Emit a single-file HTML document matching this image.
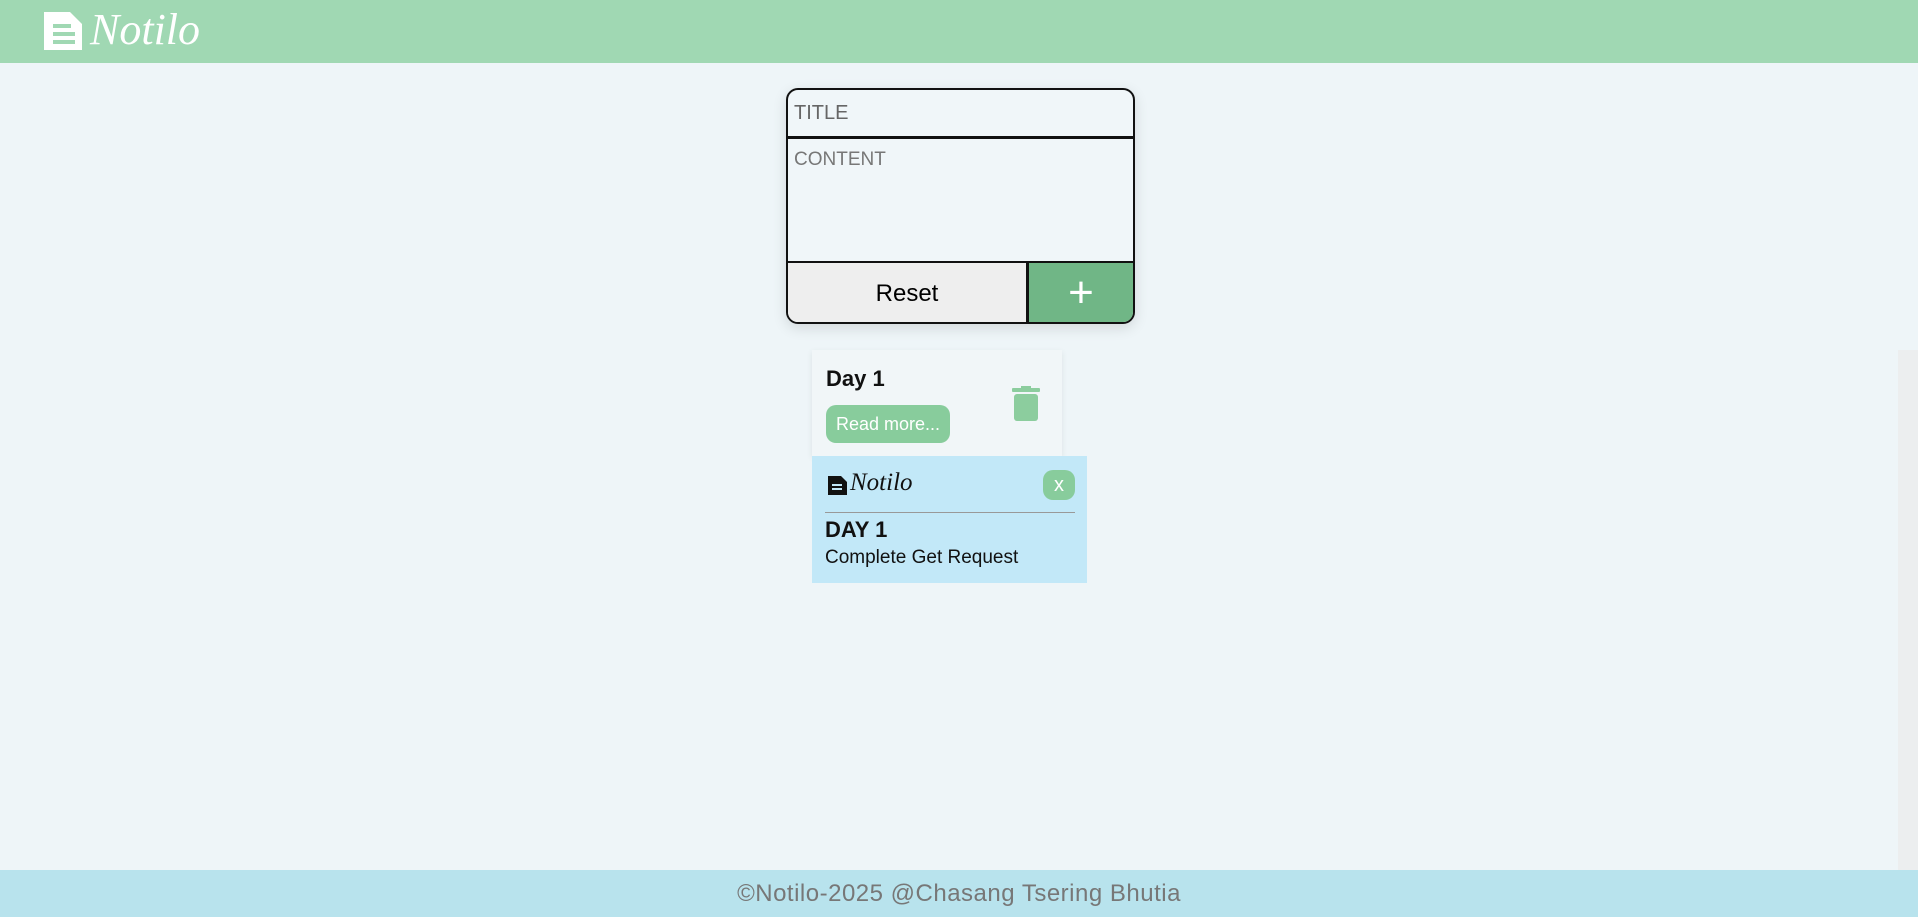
<!DOCTYPE html>
<html><head><meta charset="utf-8"><style>
*{box-sizing:border-box;margin:0;padding:0}
body{width:1918px;height:917px;overflow:hidden;background:#eef5f8;font-family:"Liberation Sans",sans-serif;position:relative}
.hdr{position:absolute;left:0;top:0;width:1918px;height:63px;background:#a0d8b3}
.logo{position:absolute;left:90px;top:4px;font-family:"Liberation Serif",serif;font-style:italic;font-size:44px;color:#fff}
.form{position:absolute;left:786px;top:88px;width:349px;height:236px;border:2px solid #111;border-radius:12px;overflow:hidden;background:#f0f6f9;box-shadow:0 4px 14px rgba(0,0,0,.12)}
.t{height:49px;border-bottom:3px solid #111;padding:12px 6px;font-size:20px;color:#666}
.c{height:124px;border-bottom:2px solid #111;padding:10px 6px;font-size:19px;color:#777}
.b{display:flex;height:59px}
.r{width:241px;border-right:3px solid #111;background:#eee;text-align:center;font-size:24px;line-height:62px;color:#000}
.p{flex:1;background:#70b686;color:#fff;text-align:center;font-size:44px;line-height:60px}
.note{position:absolute;left:812px;top:350px;width:250px;height:106px;background:#f1f6f8;box-shadow:0 2px 6px rgba(0,0,0,.08)}
.pop{position:absolute;left:812px;top:456px;width:275px;height:127px;background:#c2e8f8}
.foot{position:absolute;left:0;top:870px;width:1918px;height:47px;background:#b8e3ed;text-align:center;font-size:24px;line-height:47px;color:#777;letter-spacing:.5px}
</style></head><body>
<div class="hdr">
<svg style="position:absolute;left:44px;top:12px" width="39" height="38" viewBox="0 0 39 38"><path d="M0 0H26L38 12V38H0Z" fill="#fff"/><rect x="9" y="12" width="18" height="4" fill="#a0d8b3"/><rect x="9" y="20" width="22" height="4" fill="#a0d8b3"/><rect x="9" y="28" width="22" height="4" fill="#a0d8b3"/></svg>
<div class="logo">Notilo</div></div>
<div class="form"><div class="t">TITLE</div><div class="c">CONTENT</div><div class="b"><div class="r">Reset</div><div class="p">+</div></div></div>
<div class="note">
<div style="position:absolute;left:14px;top:16px;font-size:22px;font-weight:bold;color:#111">Day 1</div>
<div style="position:absolute;left:14px;top:55px;width:124px;height:38px;border-radius:10px;background:#88cc9c;color:#fff;font-size:18px;line-height:38px;text-align:center">Read more...</div>
<svg style="position:absolute;left:200px;top:36px" width="28" height="35" viewBox="0 0 28 35"><rect x="0" y="2" width="28" height="4" rx="1" fill="#8ccd9e"/><rect x="9" y="0" width="10" height="3" fill="#8ccd9e"/><rect x="2" y="8" width="24" height="27" rx="3" fill="#8ccd9e"/></svg>
</div>
<div class="pop">
<svg style="position:absolute;left:16px;top:20px" width="19" height="19" viewBox="0 0 19 19"><path d="M0 0H13L19 6V19H0Z" fill="#111"/><rect x="4" y="8" width="10" height="2" fill="#c2e8f8"/><rect x="4" y="12" width="10" height="2" fill="#c2e8f8"/></svg>
<div style="position:absolute;left:38px;top:13px;font-family:'Liberation Serif',serif;font-style:italic;font-size:25px;color:#111">Notilo</div>
<div style="position:absolute;left:231px;top:14px;width:32px;height:30px;border-radius:10px;background:#88cc9c;color:#fff;font-size:20px;line-height:30px;text-align:center">x</div>
<div style="position:absolute;left:13px;top:56px;width:250px;height:1px;background:#999"></div>
<div style="position:absolute;left:13px;top:61px;font-size:22px;font-weight:bold;color:#111">DAY 1</div>
<div style="position:absolute;left:13px;top:91px;font-size:19px;color:#111">Complete Get Request</div>
</div>
<div style="position:absolute;left:1898px;top:350px;width:20px;height:520px;background:#eceeef"></div>
<div class="foot">©Notilo-2025 @Chasang Tsering Bhutia</div>
</body></html>
